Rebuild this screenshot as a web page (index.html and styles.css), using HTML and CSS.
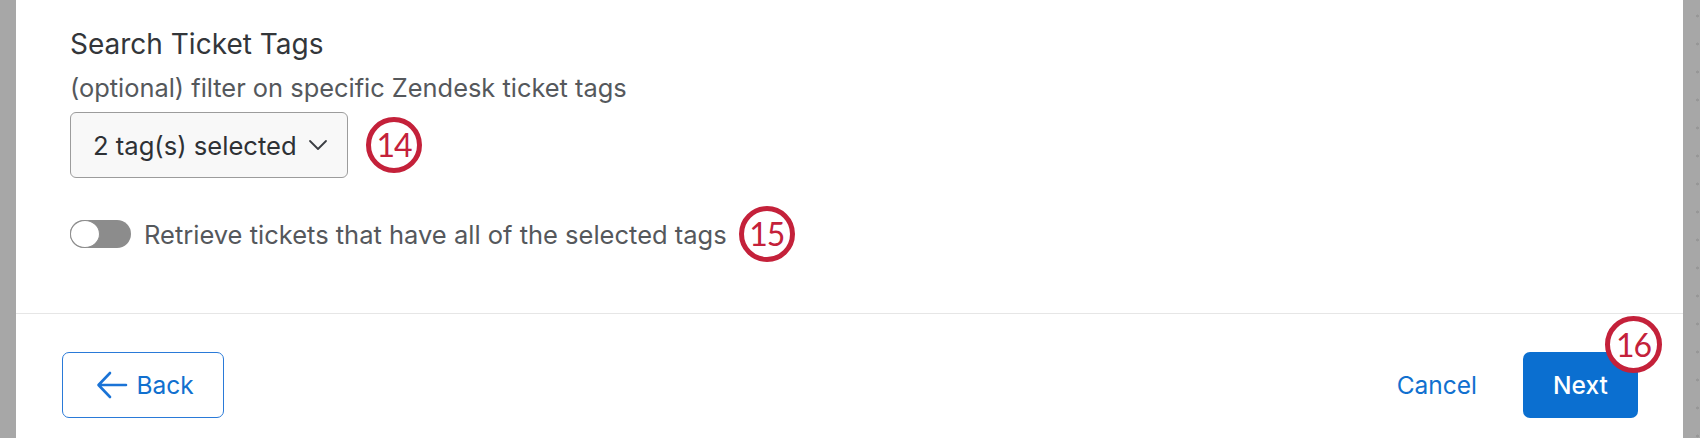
FILE: index.html
```html
<!DOCTYPE html>
<html lang="en">
<head>
<meta charset="utf-8">
<title>Search Ticket Tags</title>
<link rel="stylesheet" href="styles.css">
</head>
<body>
<div class="frame">
  <div class="side side-left"></div>
  <main class="panel">
    <section class="content">
      <h2 class="title">Search Ticket Tags</h2>
      <p class="hint">(optional) filter on specific Zendesk ticket tags</p>
      <div class="row">
        <button class="select" type="button">
          <span>2 tag(s) selected</span>
          <svg class="chevron" width="20" height="12" viewBox="0 0 20 12"><path d="M2 2 L10 10 L18 2" fill="none" stroke="#3a3d42" stroke-width="1.8" stroke-linecap="round" stroke-linejoin="round"/></svg>
        </button>
        <span class="callout callout-14">14</span>
      </div>
      <div class="row toggle-row">
        <span class="toggle"><span class="knob"></span></span>
        <span class="toggle-label">Retrieve tickets that have all of the selected tags</span>
        <span class="callout callout-15">15</span>
      </div>
    </section>
    <footer class="footer">
      <button class="btn btn-outline" type="button">
        <svg class="arrow" width="32" height="28" viewBox="0 0 32 28"><path d="M30 14 H3 M14 2 L2.5 14 L14 26" fill="none" stroke="#1a73d6" stroke-width="2.6" stroke-linecap="round" stroke-linejoin="round"/></svg>
        <span>Back</span>
      </button>
      <div class="actions">
        <button class="btn btn-link" type="button">Cancel</button>
        <div class="next-wrap">
          <button class="btn btn-primary" type="button">Next</button>
          <span class="callout callout-16">16</span>
        </div>
      </div>
    </footer>
  </main>
  <div class="side side-right"></div>
</div>
</body>
</html>
```

FILE: styles.css
```css
* { box-sizing: border-box; }

html, body {
  margin: 0;
  padding: 0;
  background: #ffffff;
}

body {
  font-family: Inter, "Liberation Sans", Arial, sans-serif;
  width: 1700px;
  height: 438px;
  overflow: hidden;
}

.frame {
  display: flex;
  width: 1700px;
  height: 438px;
}

.side {
  flex: none;
  background: #a7a7a7;
}

.side-left {
  width: 16px;
}

.side-right {
  width: 17px;
  background-color: #a7a7a7;
  background-image: radial-gradient(circle, #979797 1.2px, transparent 1.8px);
  background-size: 17px 28px;
  background-position: 6px 2px;
}

.panel {
  flex: 1;
  background: #ffffff;
  display: flex;
  flex-direction: column;
}

.content {
  padding: 26px 0 51px 54px;
  display: flex;
  flex-direction: column;
}

.title {
  margin: 0;
  font-size: 28px;
  line-height: 36px;
  font-weight: 400;
  color: #33363a;
}

.hint {
  margin: 9px 0 7px;
  font-size: 25.4px;
  line-height: 34px;
  color: #55585c;
}

.row {
  display: flex;
  align-items: center;
}

.select {
  width: 278px;
  height: 66px;
  display: flex;
  align-items: center;
  justify-content: space-between;
  padding: 0 19px 0 22px;
  border: 1.5px solid #9c9c9c;
  border-radius: 6px;
  background: #f8f8f8;
  font-family: inherit;
  font-size: 25.6px;
  color: #2e3135;
}

.chevron {
  flex: none;
}

.callout {
  flex: none;
  width: 56px;
  height: 56px;
  border: 5px solid #c4213a;
  border-radius: 50%;
  background: #ffffff;
  color: #c4213a;
  display: flex;
  align-items: center;
  justify-content: center;
  font-family: Lato, "Liberation Sans", sans-serif;
  font-size: 32px;
  letter-spacing: -1px;
  line-height: 1;
}

.callout-14 {
  margin-left: 18px;
}

.toggle-row {
  margin-top: 28px;
}

.toggle {
  flex: none;
  width: 61px;
  height: 28px;
  border-radius: 14px;
  background: #8c8c8c;
  display: flex;
  align-items: center;
}

.knob {
  width: 30px;
  height: 28px;
  border-radius: 50%;
  background: #ffffff;
  border: 1px solid #8c8c8c;
}

.toggle-label {
  margin-left: 13px;
  font-size: 25.5px;
  color: #55585c;
}

.callout-15 {
  margin-left: 12px;
}

.footer {
  border-top: 1px solid #e6e6e6;
  padding: 38px 45px 0 46px;
  display: flex;
  justify-content: space-between;
  align-items: flex-start;
}

.btn {
  font-family: inherit;
  font-size: 24.5px;
  height: 66px;
  border-radius: 7px;
  display: flex;
  align-items: center;
  justify-content: center;
  cursor: pointer;
}

.btn-outline {
  width: 162px;
  border: 1.5px solid #2a7ad8;
  background: #ffffff;
  color: #1170cf;
  gap: 8px;
  padding: 0 0 0 4px;
}

.arrow {
  flex: none;
}

.actions {
  display: flex;
  align-items: center;
  gap: 46px;
}

.btn-link {
  border: none;
  background: transparent;
  color: #1170cf;
  padding: 0;
}

.next-wrap {
  position: relative;
}

.btn-primary {
  width: 115px;
  border: none;
  background: #0b6fd0;
  color: #ffffff;
  font-weight: 500;
}

.callout-16 {
  position: absolute;
  left: 82px;
  top: -36px;
  width: 57px;
  height: 57px;
}
```
